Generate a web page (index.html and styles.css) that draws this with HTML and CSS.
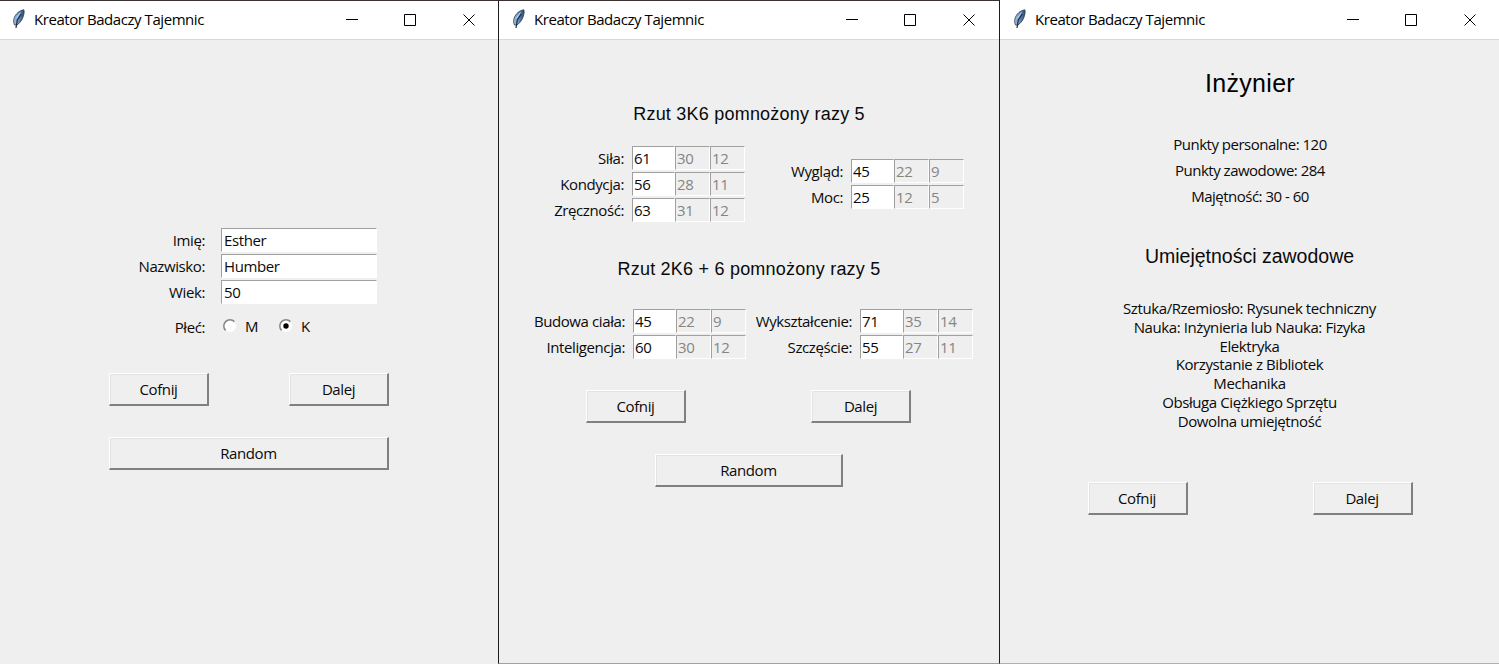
FILE: index.html
```html
<!DOCTYPE html>
<html lang="pl">
<head>
<meta charset="utf-8">
<title>Kreator Badaczy Tajemnic</title>
<link rel="stylesheet" href="styles.css">
</head>
<body>
<svg class="defs" width="0" height="0" aria-hidden="true">
  <defs>
    <linearGradient id="quill" x1="0" y1="0" x2="1" y2="0"><stop offset="0" stop-color="#a9c4df"/><stop offset=".5" stop-color="#5d8cc4"/><stop offset="1" stop-color="#2c4566"/></linearGradient>
    <symbol id="feather" viewBox="0 0 14 22">
      <path d="M11.800 1.800C7.500 2.400 3.400 5.800 2 10.500C1.300 13.500 1.700 15.400 2.600 17L5 17C8.800 14.500 11.300 10 12 5.500C12.200 4 12.200 2.500 11.800 1.800Z" fill="url(#quill)" stroke="#3c4854" stroke-width=".9"/>
      <path d="M9.300 6L5.300 12L4 20" fill="none" stroke="#222b34" stroke-width="1.200"/>
      <path d="M8.400 4.500L4.200 10.500" fill="none" stroke="#c9dff2" stroke-width="1"/>
    </symbol>
    <symbol id="controls" viewBox="0 0 130 13">
      <path d="M0 6.500H12M58.500 1.500H69.500V12.500H58.500ZM117.500 1.500L128.500 12.500M128.500 1.500L117.500 12.500" fill="none" stroke="#000" stroke-width="1"/>
    </symbol>
  </defs>
</svg>
<main class="desktop">
  <section class="window first">
    <header class="titlebar"><svg class="feather"><use href="#feather"/></svg><span class="caption">Kreator Badaczy Tajemnic</span><svg class="controls"><use href="#controls"/></svg></header>
    <div class="content person">
      <div class="form">
        <div class="row"><label>Imię:</label><span class="entry">Esther</span></div>
        <div class="row"><label>Nazwisko:</label><span class="entry">Humber</span></div>
        <div class="row"><label>Wiek:</label><span class="entry">50</span></div>
        <div class="row gender"><label>Płeć:</label><span class="options">
          <svg class="radio" viewBox="0 0 14 14"><circle cx="7" cy="7" r="6" fill="#fff"/><path d="M2.600 11.400A6 6 0 0 1 11.400 2.600" fill="none" stroke="#858585" stroke-width="1.500"/></svg><span class="m">M</span>
          <svg class="radio" viewBox="0 0 14 14"><circle cx="7" cy="7" r="6" fill="#fff"/><path d="M2.600 11.400A6 6 0 0 1 11.400 2.600" fill="none" stroke="#858585" stroke-width="1.500"/><circle cx="7" cy="7" r="2.700" fill="#000"/></svg><span>K</span>
        </span></div>
      </div>
      <div class="buttons"><button>Cofnij</button><button>Dalej</button></div>
      <button class="random">Random</button>
    </div>
  </section>
  <section class="window second">
    <header class="titlebar"><svg class="feather"><use href="#feather"/></svg><span class="caption">Kreator Badaczy Tajemnic</span><svg class="controls"><use href="#controls"/></svg></header>
    <div class="content stats">
      <h2 class="roll3">Rzut 3K6 pomnożony razy 5</h2>
      <div class="groups upper">
        <div class="group g1">
          <div class="stat"><label>Siła:</label><i>61</i><b>30</b><b>12</b></div>
          <div class="stat"><label>Kondycja:</label><i>56</i><b>28</b><b>11</b></div>
          <div class="stat"><label>Zręczność:</label><i>63</i><b>31</b><b>12</b></div>
        </div>
        <div class="group g2">
          <div class="stat"><label>Wygląd:</label><i>45</i><b>22</b><b>9</b></div>
          <div class="stat"><label>Moc:</label><i>25</i><b>12</b><b>5</b></div>
        </div>
      </div>
      <h2 class="roll2">Rzut 2K6 + 6 pomnożony razy 5</h2>
      <div class="groups lower">
        <div class="group g3">
          <div class="stat"><label>Budowa ciała:</label><i>45</i><b>22</b><b>9</b></div>
          <div class="stat"><label>Inteligencja:</label><i>60</i><b>30</b><b>12</b></div>
        </div>
        <div class="group g4">
          <div class="stat"><label>Wykształcenie:</label><i>71</i><b>35</b><b>14</b></div>
          <div class="stat"><label>Szczęście:</label><i>55</i><b>27</b><b>11</b></div>
        </div>
      </div>
      <div class="buttons"><button>Cofnij</button><button>Dalej</button></div>
      <button class="random">Random</button>
    </div>
  </section>
  <section class="window third">
    <header class="titlebar"><svg class="feather"><use href="#feather"/></svg><span class="caption">Kreator Badaczy Tajemnic</span><svg class="controls"><use href="#controls"/></svg></header>
    <div class="content job">
      <h1>Inżynier</h1>
      <div class="points"><p>Punkty personalne: 120</p><p>Punkty zawodowe: 284</p><p>Majętność: 30 - 60</p></div>
      <h2>Umiejętności zawodowe</h2>
      <div class="skills"><p>Sztuka/Rzemiosło: Rysunek techniczny</p><p>Nauka: Inżynieria lub Nauka: Fizyka</p><p>Elektryka</p><p>Korzystanie z Bibliotek</p><p>Mechanika</p><p>Obsługa Ciężkiego Sprzętu</p><p>Dowolna umiejętność</p></div>
      <div class="buttons"><button>Cofnij</button><button>Dalej</button></div>
    </div>
  </section>
</main>
</body>
</html>
```
FILE: styles.css
```css
* { box-sizing: border-box; }
body { margin: 0; font: 15px/19px "Open Sans", "Noto Sans", sans-serif; letter-spacing: -.4px; color: #0a0a0a; overflow: hidden; }
h1, h2, p { margin: 0; font-weight: normal; }
.defs { display: block; }
.desktop { display: grid; grid-template-columns: 498px 502px 499px; height: 664px; background: #efefef; }
.window { display: flex; flex-direction: column; border-top: 1px solid #3b3230; }
.second { border-left: 1px solid #1c1c1c; border-right: 1px solid #1c1c1c; border-bottom: 1px solid #a0a0a0; }
.third { border-top-color: #fff; border-bottom: 1px solid #b0b0b0; }
.titlebar { display: flex; align-items: center; flex: none; height: 39px; padding-bottom: 2px; background: #fff; border-bottom: 1px solid #d8d8d8; color: #000; }
.feather { width: 14px; height: 22px; margin-left: 12px; }
.caption { width: 180px; margin-left: 8px; white-space: nowrap; letter-spacing: -.44px; }
.controls { width: 130px; height: 13px; margin-left: 132px; }
.second .feather, .third .feather { margin-left: 13px; }
.content { display: flex; flex-direction: column; align-items: center; flex: 1; }
.person { padding-top: 188px; }
.form { display: flex; flex-direction: column; gap: 2px; width: 268px; margin-left: 12px; }
.row { display: flex; height: 24px; }
.row label { width: 95px; text-align: right; line-height: 24px; margin-left: -16px; margin-right: 16px; }
.form .row { padding-left: 5px; }
.entry { width: 156px; height: 24px; padding: 0 0 0 2px; line-height: 22px; background: #fff; border: solid; border-width: 1px; border-color: #a0a0a0 #fff #fff #a0a0a0; }
.gender { margin-top: 9px; }
.options { display: flex; align-items: center; gap: 8px; padding: 0 0 2px 2px; }
.radio { width: 14px; height: 14px; }
.options .m { margin-right: 13px; }
.buttons { display: flex; justify-content: space-between; width: 280px; margin-top: 34px; }
button { width: 100px; height: 33px; padding: 0; font: inherit; letter-spacing: inherit; color: #0a0a0a; background: #efefef; border: solid; border-width: 1px 2px 2px 1px; border-color: #fff #808080 #808080 #fff; box-shadow: inset 1px 1px #e3e3e3; }
.person .random { width: 280px; margin-top: 31px; }
h2 { font: 18px/24px "Liberation Sans", Arial, sans-serif; letter-spacing: .22px; }
.roll3 { margin-top: 62px; }
.groups { display: flex; width: 500px; }
.group { display: flex; flex-direction: column; gap: 2px; }
.stat { display: flex; height: 24px; line-height: 22px; }
.stat label { text-align: right; white-space: nowrap; margin-right: 8px; line-height: 24px; }
.stat i, .stat b { font-style: normal; font-weight: normal; border: 1px solid; border-color: #a0a0a0 #fff #fff #a0a0a0; padding-left: 1px; }
.stat i { width: 43px; background: #fff; }
.stat b { width: 35px; color: #858585; }
.upper { margin-top: 20px; align-items: center; }
.g1 label { width: 125px; }
.g2 label { width: 98px; }
.roll2 { margin-top: 35px; }
.lower { margin-top: 28px; }
.g3 label { width: 126px; }
.g4 label { width: 106px; }
.stats .buttons { width: 325px; margin: 31px 1px 0 0; }
.stats .random { width: 188px; margin-top: 31px; }
h1 { margin: 28px 0 0 1px; font: 25px/30px "Liberation Sans", Arial, sans-serif; letter-spacing: .3px; color: #000; }
.points { margin: 33px 0 0 1px; text-align: center; line-height: 26px; letter-spacing: -.5px; }
.job h2 { margin-top: 35px; font-size: 19.500px; letter-spacing: 0; }
.skills { margin-top: 31px; text-align: center; line-height: 18.75px; }
.job .buttons { width: 325px; margin: 52px 0 0 1px; }
```
